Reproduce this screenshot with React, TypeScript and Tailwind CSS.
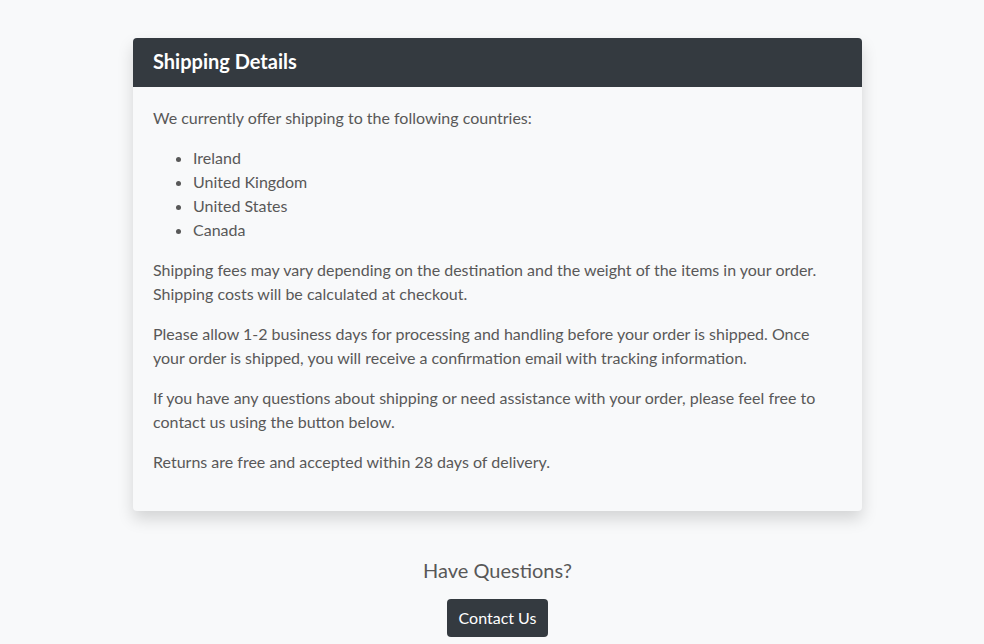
const countries = ['Ireland', 'United Kingdom', 'United States', 'Canada']

export default function App() {
  return (
    <div
      className="min-h-[644px] bg-[#f8f9fa] text-[#585858] pl-[11px] pt-[38px] pb-[7px]"
      style={{ fontFamily: 'Lato, "Open Sans", sans-serif' }}
    >
      <div className="flex flex-col items-center">
        {/* Shipping card */}
        <div className="w-[729px] rounded-[4px] bg-[#f8f9fa] shadow-[0_0.5rem_1rem_rgba(0,0,0,0.15)] overflow-hidden">
          <div className="bg-[#343a40] px-5 pt-[11px] pb-[14px]">
            <h5 className="text-[20px] leading-[24px] font-bold text-white">Shipping Details</h5>
          </div>
          <div className="px-5 pt-[19px] pb-[21px] text-[16px] leading-[24px]">
            <p className="mb-4">We currently offer shipping to the following countries:</p>
            <ul className="mb-4 pl-10 list-disc">
              {countries.map((c) => (
                <li key={c}>{c}</li>
              ))}
            </ul>
            <p className="mb-4">
              Shipping fees may vary depending on the destination and the weight of the items in your order.
              Shipping costs will be calculated at checkout.
            </p>
            <p className="mb-4">
              Please allow 1-2 business days for processing and handling before your order is shipped. Once
              your order is shipped, you will receive a confirmation email with tracking information.
            </p>
            <p className="mb-4">
              If you have any questions about shipping or need assistance with your order, please feel free to
              contact us using the button below.
            </p>
            <p className="mb-4">Returns are free and accepted within 28 days of delivery.</p>
          </div>
        </div>

        {/* Contact */}
        <div className="mt-[47px] flex flex-col items-center">
          <h5 className="text-[20px] leading-[24px] mb-[17px]">Have Questions?</h5>
          <button className="bg-[#343a40] text-white text-[16px] leading-[24px] px-3 py-[7px] rounded-[4px]">
            Contact Us
          </button>
        </div>
      </div>
    </div>
  )
}
